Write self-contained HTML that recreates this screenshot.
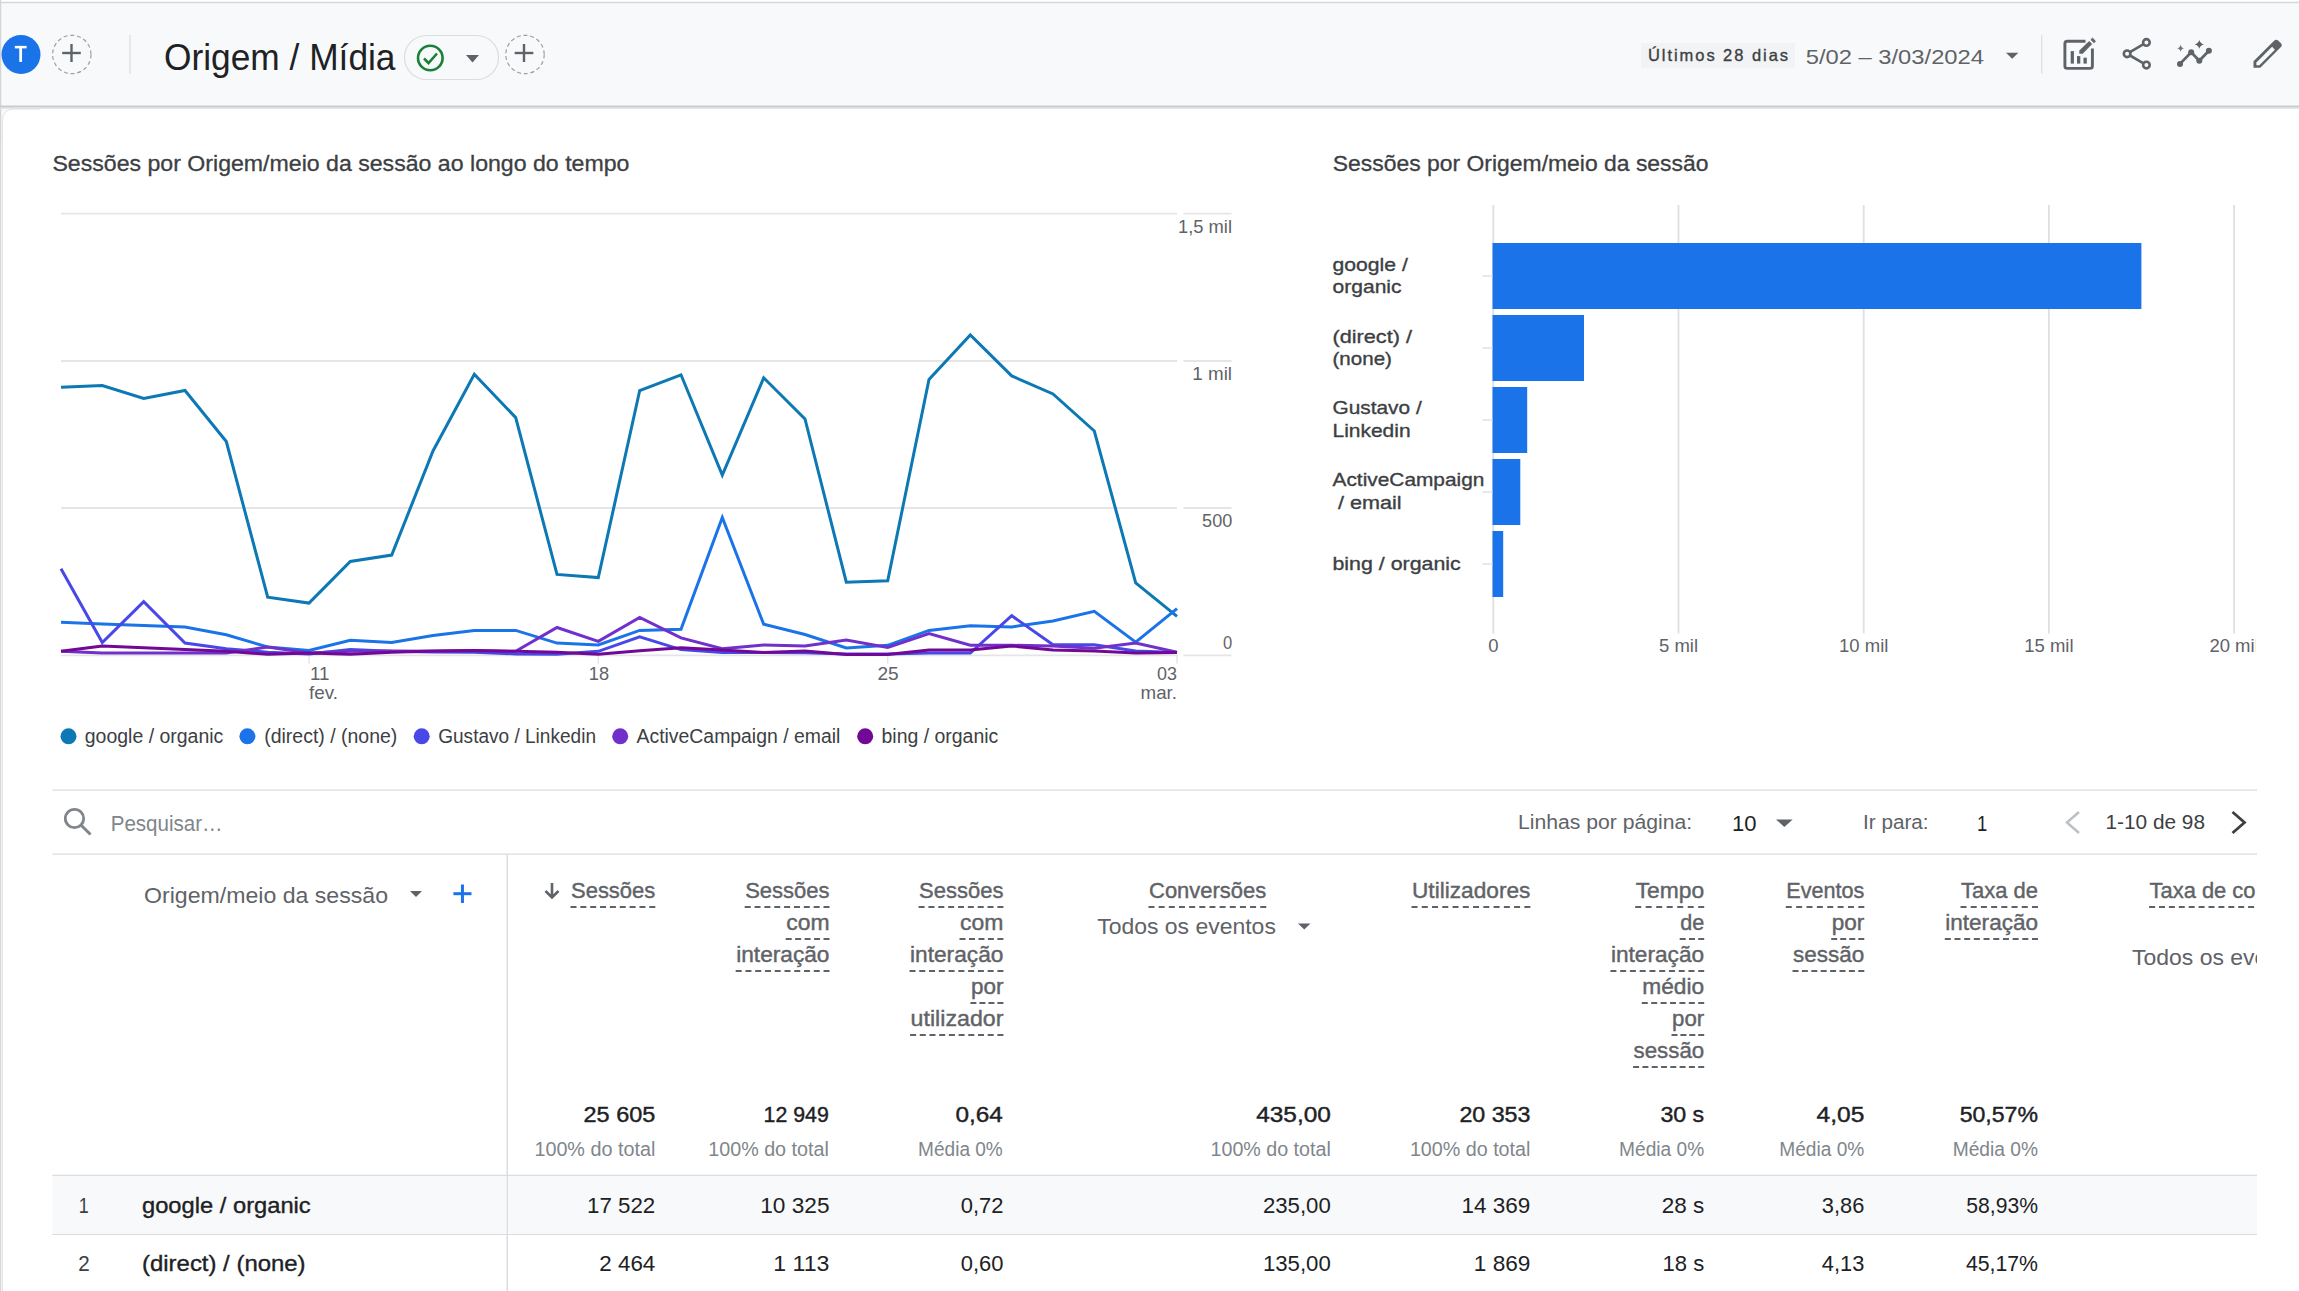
<!DOCTYPE html>
<html><head><meta charset="utf-8"><title>Origem / Mídia</title>
<style>
html,body{margin:0;padding:0;background:#fff;overflow:hidden;}
svg{display:block;font-family:"Liberation Sans",sans-serif;}
</style></head><body>
<svg width="2299" height="1291" viewBox="0 0 2299 1291">
<rect x="0" y="0" width="2299" height="140" fill="#f8f9fa" />
<rect x="0" y="0" width="2299" height="1.5" fill="#ffffff" />
<line x1="0" y1="2.5" x2="2299" y2="2.5" stroke="#d6d9dc" stroke-width="1.5" />
<line x1="0.5" y1="0" x2="0.5" y2="1291" stroke="#d3d5d8" stroke-width="1.5" />
<line x1="0" y1="106.5" x2="2299" y2="106.5" stroke="#c9cacc" stroke-width="1.5" />
<line x1="0" y1="108" x2="2299" y2="108" stroke="#dfe1e3" stroke-width="1.5" />
<path d="M2.5 1291 L2.5 121 Q2.5 109 14.5 109 L2299 109 L2299 1291 Z" fill="#ffffff"/>
<path d="M2.5 1291 L2.5 121 Q2.5 109 14.5 109 L40 109" fill="none" stroke="#e3e4e6" stroke-width="1"/>
<line x1="0" y1="106.5" x2="2299" y2="106.5" stroke="#c9cacc" stroke-width="1.5" />
<line x1="14" y1="108.2" x2="2299" y2="108.2" stroke="#dfe1e3" stroke-width="1.2" />
<circle cx="21" cy="54.5" r="19.5" fill="#1a73e8"/>
<rect x="14.8" y="45.9" width="11.8" height="2.5" fill="#ffffff" />
<rect x="19.25" y="45.9" width="2.8" height="16" fill="#ffffff" />
<circle cx="71.8" cy="54.5" r="19.2" fill="none" stroke="#9aa0a6" stroke-width="1.2" stroke-dasharray="4 2.8"/>
<line x1="62.2" y1="53" x2="80.8" y2="53" stroke="#5f6368" stroke-width="2.4" />
<line x1="71.5" y1="44" x2="71.5" y2="62" stroke="#5f6368" stroke-width="2.4" />
<circle cx="525" cy="54.5" r="19.2" fill="none" stroke="#9aa0a6" stroke-width="1.2" stroke-dasharray="4 2.8"/>
<line x1="514.7" y1="53" x2="533.3" y2="53" stroke="#5f6368" stroke-width="2.4" />
<line x1="524" y1="44" x2="524" y2="62" stroke="#5f6368" stroke-width="2.4" />
<line x1="130" y1="35" x2="130" y2="74" stroke="#dadce0" stroke-width="1.2" />
<text x="164.0" y="70.0" font-size="36" fill="#202124" textLength="231.5" lengthAdjust="spacingAndGlyphs">Origem / Mídia</text>
<rect x="404.5" y="35.5" width="94" height="44" rx="22" fill="none" stroke="#dadce0" stroke-width="1.2"/>
<circle cx="430.3" cy="58" r="12.3" fill="none" stroke="#188038" stroke-width="2.6"/>
<polyline points="424,58.5 428.5,63 437,53.5" fill="none" stroke="#188038" stroke-width="2.6"/>
<polygon points="466,55 479,55 472.5,62.5" fill="#5f6368"/>
<rect x="1641" y="43" width="154" height="25.3" fill="#f1f3f4" />
<text x="1648.0" y="60.7" font-size="16.5" fill="#3c4043" stroke="#3c4043" stroke-width="0.35" textLength="140.0" lengthAdjust="spacing">Últimos 28 dias</text>
<text x="1805.7" y="63.5" font-size="21" fill="#5f6368" textLength="178.3" lengthAdjust="spacingAndGlyphs">5/02 – 3/03/2024</text>
<polygon points="2006,52.8 2018.4,52.8 2012.2,58.8" fill="#5f6368"/>
<line x1="2041.7" y1="35.3" x2="2041.7" y2="73.6" stroke="#dadce0" stroke-width="1.2" />
<path d="M2085.5 41.3 L2067.3 41.3 Q2064.9 41.3 2064.9 43.7 L2064.9 66 Q2064.9 68.4 2067.3 68.4 L2090 68.4 Q2092.4 68.4 2092.4 66 L2092.4 48.5" fill="none" stroke="#5f6368" stroke-width="2.9"/>
<rect x="2070.7" y="51.1" width="3.2" height="12.5" fill="#5f6368" />
<rect x="2077" y="56.1" width="3.3" height="7.5" fill="#5f6368" />
<rect x="2083.5" y="57.7" width="3.3" height="5.9" fill="#5f6368" />
<path d="M2079.3 50.6 L2089.2 41.1 L2092.2 44.1 L2082.7 53.8 L2079.3 53.8 Z" fill="#5f6368"/>
<path d="M2090.9 39.6 L2092.5 38.2 L2095.4 41 L2094.1 42.7 Z" fill="#5f6368" stroke="#5f6368" stroke-width="1"/>
<g fill="none" stroke="#5f6368" stroke-width="2.6"><circle cx="2146.4" cy="42.4" r="3.3"/><circle cx="2127.1" cy="53.8" r="3.3"/><circle cx="2146.4" cy="65.05" r="3.3"/><line x1="2130" y1="52.1" x2="2143.5" y2="44.1"/><line x1="2130" y1="55.5" x2="2143.5" y2="63.3"/></g>
<polyline points="2180,63.9 2191.2,52.2 2199.3,60.7 2208.9,50.7" fill="none" stroke="#5f6368" stroke-width="2.7"/>
<circle cx="2180" cy="63.9" r="3" fill="#5f6368"/>
<circle cx="2191.2" cy="52.2" r="3" fill="#5f6368"/>
<circle cx="2199.3" cy="60.7" r="3" fill="#5f6368"/>
<circle cx="2208.9" cy="50.7" r="3" fill="#5f6368"/>
<path d="M2199.3 40.0 Q2200.2000000000003 43.5 2203.9 44.4 Q2200.2000000000003 45.3 2199.3 48.8 Q2198.4 45.3 2194.7000000000003 44.4 Q2198.4 43.5 2199.3 40.0 Z" fill="#5f6368"/>
<path d="M2180.6 44.5 Q2180.95 47.949999999999996 2184.6 48.3 Q2180.95 48.65 2180.6 52.099999999999994 Q2180.25 48.65 2176.6 48.3 Q2180.25 47.949999999999996 2180.6 44.5 Z" fill="#6f7479"/>
<path d="M2253.5 67.7 L2253.5 61.3 L2274.1 40.7 Q2276.25 38.55 2278.4 40.7 L2280.7 43 Q2282.85 45.15 2280.7 47.3 L2260.3 67.7 Z" fill="#5f6368"/>
<path d="M2272.05 46.85 L2274.9 49.7 L2259.4 65.2 L2256.4 65.2 L2256.4 62.5 Z" fill="#f8f9fa"/>
<text x="52.4" y="170.8" font-size="22" fill="#3c4043" stroke="#3c4043" stroke-width="0.3" textLength="577.0" lengthAdjust="spacingAndGlyphs">Sessões por Origem/meio da sessão ao longo do tempo</text>
<line x1="61" y1="213.7" x2="1177" y2="213.7" stroke="#e5e5e5" stroke-width="1.8" />
<line x1="1183.5" y1="213.7" x2="1231.5" y2="213.7" stroke="#e5e5e5" stroke-width="1.8" />
<line x1="61" y1="361" x2="1177" y2="361" stroke="#e5e5e5" stroke-width="1.8" />
<line x1="1183.5" y1="361" x2="1231.5" y2="361" stroke="#e5e5e5" stroke-width="1.8" />
<line x1="61" y1="508" x2="1177" y2="508" stroke="#e5e5e5" stroke-width="1.8" />
<line x1="1183.5" y1="508" x2="1231.5" y2="508" stroke="#e5e5e5" stroke-width="1.8" />
<line x1="61" y1="655.3" x2="1177" y2="655.3" stroke="#e5e5e5" stroke-width="1.8" />
<line x1="1183.5" y1="655.3" x2="1231.5" y2="655.3" stroke="#e5e5e5" stroke-width="1.8" />
<text x="1232.0" y="232.8" font-size="19" fill="#5f6368" textLength="54.0" lengthAdjust="spacingAndGlyphs" text-anchor="end">1,5 mil</text>
<text x="1232.0" y="379.8" font-size="19" fill="#5f6368" textLength="39.7" lengthAdjust="spacingAndGlyphs" text-anchor="end">1 mil</text>
<text x="1232.3" y="526.8" font-size="19" fill="#5f6368" textLength="30.2" lengthAdjust="spacingAndGlyphs" text-anchor="end">500</text>
<text x="1232.3" y="648.5" font-size="19" fill="#5f6368" textLength="9.2" lengthAdjust="spacingAndGlyphs" text-anchor="end">0</text>
<line x1="309" y1="655" x2="309" y2="663.5" stroke="#e5e5e5" stroke-width="1.5" />
<line x1="598.3" y1="655" x2="598.3" y2="663.5" stroke="#e5e5e5" stroke-width="1.5" />
<line x1="887.7" y1="655" x2="887.7" y2="663.5" stroke="#e5e5e5" stroke-width="1.5" />
<line x1="1177" y1="655" x2="1177" y2="663.5" stroke="#e5e5e5" stroke-width="1.5" />
<text x="310.0" y="680.2" font-size="19" fill="#5f6368" textLength="19.5" lengthAdjust="spacingAndGlyphs">11</text>
<text x="309.0" y="698.5" font-size="19" fill="#5f6368" textLength="29.0" lengthAdjust="spacingAndGlyphs">fev.</text>
<text x="598.9" y="679.8" font-size="19" fill="#5f6368" textLength="20.3" lengthAdjust="spacingAndGlyphs" text-anchor="middle">18</text>
<text x="888.0" y="679.8" font-size="19" fill="#5f6368" textLength="21.2" lengthAdjust="spacingAndGlyphs" text-anchor="middle">25</text>
<text x="1177.0" y="679.7" font-size="19" fill="#5f6368" textLength="20.0" lengthAdjust="spacingAndGlyphs" text-anchor="end">03</text>
<text x="1177.0" y="698.7" font-size="19" fill="#5f6368" textLength="36.5" lengthAdjust="spacingAndGlyphs" text-anchor="end">mar.</text>
<polyline points="61.0,387.3 102.3,385.6 143.7,398.4 185.0,390.5 226.3,441.5 267.7,597.2 309.0,603.1 350.3,561.4 391.7,555.1 433.0,451.0 474.3,374.2 515.7,417.6 557.0,574.4 598.3,577.6 639.7,390.5 681.0,374.8 722.3,475.1 763.7,377.8 805.0,419.0 846.3,582.2 887.7,580.8 929.0,379.4 970.3,335.0 1011.7,375.9 1053.0,394.0 1094.3,431.0 1135.7,582.8 1177.0,616.3" fill="none" stroke="#0c78b4" stroke-width="3" stroke-linejoin="miter" stroke-miterlimit="4"/>
<polyline points="61.0,622.3 102.3,624.0 143.7,625.6 185.0,627.0 226.3,634.8 267.7,647.0 309.0,650.4 350.3,640.3 391.7,642.6 433.0,635.5 474.3,630.4 515.7,630.4 557.0,643.1 598.3,644.9 639.7,630.4 681.0,629.2 722.3,517.4 763.7,624.3 805.0,634.5 846.3,647.9 887.7,645.3 929.0,630.4 970.3,625.7 1011.7,626.9 1053.0,621.0 1094.3,611.4 1135.7,642.2 1177.0,608.6" fill="none" stroke="#1a73e8" stroke-width="3" stroke-linejoin="miter" stroke-miterlimit="4"/>
<polyline points="61.0,568.7 102.3,642.6 143.7,601.7 185.0,643.1 226.3,648.7 267.7,652.2 309.0,653.9 350.3,649.6 391.7,651.3 433.0,652.0 474.3,652.2 515.7,653.9 557.0,654.3 598.3,651.3 639.7,636.9 681.0,649.6 722.3,652.5 763.7,652.5 805.0,652.8 846.3,654.0 887.7,654.0 929.0,653.0 970.3,653.0 1011.7,615.7 1053.0,644.8 1094.3,644.8 1135.7,650.9 1177.0,652.6" fill="none" stroke="#4848e8" stroke-width="3" stroke-linejoin="miter" stroke-miterlimit="4"/>
<polyline points="61.0,651.3 102.3,653.0 143.7,653.0 185.0,653.0 226.3,653.0 267.7,647.0 309.0,653.0 350.3,651.3 391.7,651.0 433.0,651.3 474.3,650.4 515.7,651.3 557.0,627.5 598.3,641.4 639.7,617.4 681.0,637.9 722.3,648.7 763.7,644.9 805.0,646.0 846.3,640.1 887.7,647.4 929.0,633.5 970.3,645.3 1011.7,645.3 1053.0,646.0 1094.3,648.3 1135.7,643.0 1177.0,652.3" fill="none" stroke="#7230ca" stroke-width="3" stroke-linejoin="miter" stroke-miterlimit="4"/>
<polyline points="61.0,651.3 102.3,646.1 143.7,647.8 185.0,649.6 226.3,651.3 267.7,654.3 309.0,653.0 350.3,654.3 391.7,652.2 433.0,651.0 474.3,650.4 515.7,651.3 557.0,652.2 598.3,654.3 639.7,650.8 681.0,647.8 722.3,650.1 763.7,652.5 805.0,651.0 846.3,654.4 887.7,654.4 929.0,650.0 970.3,650.0 1011.7,646.0 1053.0,650.0 1094.3,650.9 1135.7,653.0 1177.0,652.6" fill="none" stroke="#720896" stroke-width="3" stroke-linejoin="miter" stroke-miterlimit="4"/>
<circle cx="68.5" cy="736.3" r="8" fill="#0c78b4"/>
<text x="84.8" y="742.8" font-size="19.5" fill="#3c4043" textLength="138.5" lengthAdjust="spacingAndGlyphs">google / organic</text>
<circle cx="247.4" cy="736.3" r="8" fill="#1a73e8"/>
<text x="264.2" y="742.8" font-size="19.5" fill="#3c4043" textLength="133.1" lengthAdjust="spacingAndGlyphs">(direct) / (none)</text>
<circle cx="421.7" cy="736.3" r="8" fill="#4848e8"/>
<text x="438.2" y="742.8" font-size="19.5" fill="#3c4043" textLength="157.8" lengthAdjust="spacingAndGlyphs">Gustavo / Linkedin</text>
<circle cx="620.2" cy="736.3" r="8" fill="#7230ca"/>
<text x="636.5" y="742.8" font-size="19.5" fill="#3c4043" textLength="203.8" lengthAdjust="spacingAndGlyphs">ActiveCampaign / email</text>
<circle cx="865.2" cy="736.3" r="8" fill="#720896"/>
<text x="881.5" y="742.8" font-size="19.5" fill="#3c4043" textLength="116.8" lengthAdjust="spacingAndGlyphs">bing / organic</text>
<text x="1332.8" y="170.8" font-size="22" fill="#3c4043" stroke="#3c4043" stroke-width="0.3" textLength="375.7" lengthAdjust="spacingAndGlyphs">Sessões por Origem/meio da sessão</text>
<line x1="1493.3" y1="205" x2="1493.3" y2="633.5" stroke="#e0e0e3" stroke-width="1.8" />
<line x1="1678.5" y1="205" x2="1678.5" y2="633.5" stroke="#e0e0e3" stroke-width="1.8" />
<line x1="1863.7" y1="205" x2="1863.7" y2="633.5" stroke="#e0e0e3" stroke-width="1.8" />
<line x1="2048.9" y1="205" x2="2048.9" y2="633.5" stroke="#e0e0e3" stroke-width="1.8" />
<line x1="2234.1" y1="205" x2="2234.1" y2="633.5" stroke="#e0e0e3" stroke-width="1.8" />
<rect x="1492.5" y="243" width="648.9" height="66" fill="#1a73e8" />
<line x1="1482.5" y1="276" x2="1492.5" y2="276" stroke="#e0e0e3" stroke-width="1.5" />
<rect x="1492.5" y="315" width="91.5" height="66" fill="#1a73e8" />
<line x1="1482.5" y1="348" x2="1492.5" y2="348" stroke="#e0e0e3" stroke-width="1.5" />
<rect x="1492.5" y="387" width="34.7" height="66" fill="#1a73e8" />
<line x1="1482.5" y1="420" x2="1492.5" y2="420" stroke="#e0e0e3" stroke-width="1.5" />
<rect x="1492.5" y="459" width="27.8" height="66" fill="#1a73e8" />
<line x1="1482.5" y1="492" x2="1492.5" y2="492" stroke="#e0e0e3" stroke-width="1.5" />
<rect x="1492.5" y="531" width="10.7" height="66" fill="#1a73e8" />
<line x1="1482.5" y1="564" x2="1492.5" y2="564" stroke="#e0e0e3" stroke-width="1.5" />
<text x="1332.5" y="270.6" font-size="19" fill="#3c4043" stroke="#3c4043" stroke-width="0.35" textLength="75.3" lengthAdjust="spacingAndGlyphs">google /</text>
<text x="1332.5" y="293.0" font-size="19" fill="#3c4043" stroke="#3c4043" stroke-width="0.35" textLength="69.1" lengthAdjust="spacingAndGlyphs">organic</text>
<text x="1332.5" y="342.5" font-size="19" fill="#3c4043" stroke="#3c4043" stroke-width="0.35" textLength="79.5" lengthAdjust="spacingAndGlyphs">(direct) /</text>
<text x="1332.5" y="364.8" font-size="19" fill="#3c4043" stroke="#3c4043" stroke-width="0.35" textLength="59.4" lengthAdjust="spacingAndGlyphs">(none)</text>
<text x="1332.5" y="414.1" font-size="19" fill="#3c4043" stroke="#3c4043" stroke-width="0.35" textLength="89.2" lengthAdjust="spacingAndGlyphs">Gustavo /</text>
<text x="1332.5" y="437.3" font-size="19" fill="#3c4043" stroke="#3c4043" stroke-width="0.35" textLength="78.1" lengthAdjust="spacingAndGlyphs">Linkedin</text>
<text x="1332.5" y="485.7" font-size="19" fill="#3c4043" stroke="#3c4043" stroke-width="0.35" textLength="151.9" lengthAdjust="spacingAndGlyphs">ActiveCampaign</text>
<text x="1338.0" y="508.9" font-size="19" fill="#3c4043" stroke="#3c4043" stroke-width="0.35" textLength="63.6" lengthAdjust="spacingAndGlyphs">/ email</text>
<text x="1332.5" y="570.2" font-size="19" fill="#3c4043" stroke="#3c4043" stroke-width="0.35" textLength="128.2" lengthAdjust="spacingAndGlyphs">bing / organic</text>
<text x="1493.3" y="651.8" font-size="18.5" fill="#5f6368" text-anchor="middle">0</text>
<text x="1678.5" y="651.8" font-size="18.5" fill="#5f6368" text-anchor="middle">5 mil</text>
<text x="1863.7" y="651.8" font-size="18.5" fill="#5f6368" text-anchor="middle">10 mil</text>
<text x="2048.9" y="651.8" font-size="18.5" fill="#5f6368" text-anchor="middle">15 mil</text>
<clipPath id="cl20"><rect x="1300" y="600" width="956" height="80"/></clipPath>
<text x="2234.1" y="651.8" font-size="18.5" fill="#5f6368" text-anchor="middle" clip-path="url(#cl20)">20 mil</text>
<line x1="52.4" y1="790.2" x2="2257" y2="790.2" stroke="#dadce0" stroke-width="1.2" />
<line x1="52.4" y1="854.2" x2="2257" y2="854.2" stroke="#dadce0" stroke-width="1.2" />
<circle cx="74.5" cy="818.5" r="9.2" fill="none" stroke="#80868b" stroke-width="2.8"/>
<line x1="81.2" y1="825.2" x2="90.5" y2="834.5" stroke="#80868b" stroke-width="3" />
<text x="110.7" y="831.3" font-size="22" fill="#80868b" textLength="112.0" lengthAdjust="spacingAndGlyphs">Pesquisar…</text>
<text x="1518.0" y="829.3" font-size="20" fill="#5f6368" textLength="174.2" lengthAdjust="spacingAndGlyphs">Linhas por página:</text>
<text x="1732.0" y="831.0" font-size="22" fill="#202124" textLength="24.5" lengthAdjust="spacingAndGlyphs">10</text>
<polygon points="1776,819.5 1792.7,819.5 1784.35,827" fill="#5f6368"/>
<text x="1863.0" y="829.3" font-size="20" fill="#5f6368" textLength="65.6" lengthAdjust="spacingAndGlyphs">Ir para:</text>
<text x="1977.0" y="831.0" font-size="22" fill="#202124" textLength="10.3" lengthAdjust="spacingAndGlyphs">1</text>
<polyline points="2079,812 2067,822.5 2079,833" fill="none" stroke="#bdc1c6" stroke-width="2.6"/>
<text x="2105.5" y="829.3" font-size="20" fill="#3c4043" textLength="99.5" lengthAdjust="spacingAndGlyphs">1-10 de 98</text>
<polyline points="2232.5,812 2244.5,822.5 2232.5,833" fill="none" stroke="#3c4043" stroke-width="2.8"/>
<line x1="507.3" y1="854.2" x2="507.3000000000002" y2="1291" stroke="#dadce0" stroke-width="1.2" />
<text x="144.0" y="902.5" font-size="22" fill="#5f6368" textLength="244.0" lengthAdjust="spacingAndGlyphs">Origem/meio da sessão</text>
<polygon points="410,891 422,891 416,897" fill="#5f6368"/>
<line x1="453.4" y1="893.7" x2="471.5" y2="893.7" stroke="#1a73e8" stroke-width="3" />
<line x1="462.45" y1="884.5" x2="462.45" y2="903" stroke="#1a73e8" stroke-width="3" />
<path d="M552 883 L552 897 M545.5 891 L552 897.5 L558.5 891" fill="none" stroke="#5f6368" stroke-width="2.6"/>
<text x="655.3" y="898.0" font-size="22" fill="#5f6368" stroke="#5f6368" stroke-width="0.4" textLength="84.3" lengthAdjust="spacingAndGlyphs" text-anchor="end">Sessões</text>
<line x1="570.5" y1="907" x2="655.3" y2="907" stroke="#5f6368" stroke-width="1.9" stroke-dasharray="6 3.85"/>
<text x="829.5" y="898.0" font-size="22" fill="#5f6368" stroke="#5f6368" stroke-width="0.4" textLength="84.3" lengthAdjust="spacingAndGlyphs" text-anchor="end">Sessões</text>
<line x1="744.7" y1="907" x2="829.5" y2="907" stroke="#5f6368" stroke-width="1.9" stroke-dasharray="6 3.85"/>
<text x="829.5" y="930.0" font-size="22" fill="#5f6368" stroke="#5f6368" stroke-width="0.4" textLength="43.3" lengthAdjust="spacingAndGlyphs" text-anchor="end">com</text>
<line x1="785.7" y1="939" x2="829.5" y2="939" stroke="#5f6368" stroke-width="1.9" stroke-dasharray="6 3.45"/>
<text x="829.5" y="962.0" font-size="22" fill="#5f6368" stroke="#5f6368" stroke-width="0.4" textLength="93.3" lengthAdjust="spacingAndGlyphs" text-anchor="end">interação</text>
<line x1="735.7" y1="971" x2="829.5" y2="971" stroke="#5f6368" stroke-width="1.9" stroke-dasharray="6 3.76"/>
<text x="1003.4" y="898.0" font-size="22" fill="#5f6368" stroke="#5f6368" stroke-width="0.4" textLength="84.3" lengthAdjust="spacingAndGlyphs" text-anchor="end">Sessões</text>
<line x1="918.6" y1="907" x2="1003.4" y2="907" stroke="#5f6368" stroke-width="1.9" stroke-dasharray="6 3.85"/>
<text x="1003.4" y="930.0" font-size="22" fill="#5f6368" stroke="#5f6368" stroke-width="0.4" textLength="43.4" lengthAdjust="spacingAndGlyphs" text-anchor="end">com</text>
<line x1="959.5" y1="939" x2="1003.4" y2="939" stroke="#5f6368" stroke-width="1.9" stroke-dasharray="6 3.47"/>
<text x="1003.4" y="962.0" font-size="22" fill="#5f6368" stroke="#5f6368" stroke-width="0.4" textLength="93.4" lengthAdjust="spacingAndGlyphs" text-anchor="end">interação</text>
<line x1="909.5" y1="971" x2="1003.4" y2="971" stroke="#5f6368" stroke-width="1.9" stroke-dasharray="6 3.77"/>
<text x="1003.4" y="994.0" font-size="22" fill="#5f6368" stroke="#5f6368" stroke-width="0.4" textLength="32.5" lengthAdjust="spacingAndGlyphs" text-anchor="end">por</text>
<line x1="970.4" y1="1003" x2="1003.4" y2="1003" stroke="#5f6368" stroke-width="1.9" stroke-dasharray="6 3.00"/>
<text x="1003.4" y="1026.0" font-size="22" fill="#5f6368" stroke="#5f6368" stroke-width="0.4" textLength="92.8" lengthAdjust="spacingAndGlyphs" text-anchor="end">utilizador</text>
<line x1="910.1" y1="1035" x2="1003.4" y2="1035" stroke="#5f6368" stroke-width="1.9" stroke-dasharray="6 3.70"/>
<text x="1266.3" y="898.0" font-size="22" fill="#5f6368" stroke="#5f6368" stroke-width="0.4" textLength="117.3" lengthAdjust="spacingAndGlyphs" text-anchor="end">Conversões</text>
<line x1="1148.5" y1="907" x2="1266.3" y2="907" stroke="#5f6368" stroke-width="1.9" stroke-dasharray="6 4.16"/>
<text x="1097.2" y="934.0" font-size="22" fill="#5f6368" textLength="178.7" lengthAdjust="spacingAndGlyphs">Todos os eventos</text>
<polygon points="1298,923.5 1310.5,923.5 1304.25,929.5" fill="#5f6368"/>
<text x="1530.4" y="898.0" font-size="22" fill="#5f6368" stroke="#5f6368" stroke-width="0.4" textLength="118.4" lengthAdjust="spacingAndGlyphs" text-anchor="end">Utilizadores</text>
<line x1="1411.5" y1="907" x2="1530.4" y2="907" stroke="#5f6368" stroke-width="1.9" stroke-dasharray="6 4.26"/>
<text x="1704.2" y="898.0" font-size="22" fill="#5f6368" stroke="#5f6368" stroke-width="0.4" textLength="68.5" lengthAdjust="spacingAndGlyphs" text-anchor="end">Tempo</text>
<line x1="1635.2" y1="907" x2="1704.2" y2="907" stroke="#5f6368" stroke-width="1.9" stroke-dasharray="6 4.50"/>
<text x="1704.2" y="930.0" font-size="22" fill="#5f6368" stroke="#5f6368" stroke-width="0.4" textLength="24.0" lengthAdjust="spacingAndGlyphs" text-anchor="end">de</text>
<line x1="1679.7" y1="939" x2="1704.2" y2="939" stroke="#5f6368" stroke-width="1.9" stroke-dasharray="6 3.25"/>
<text x="1704.2" y="962.0" font-size="22" fill="#5f6368" stroke="#5f6368" stroke-width="0.4" textLength="93.3" lengthAdjust="spacingAndGlyphs" text-anchor="end">interação</text>
<line x1="1610.4" y1="971" x2="1704.2" y2="971" stroke="#5f6368" stroke-width="1.9" stroke-dasharray="6 3.76"/>
<text x="1704.2" y="994.0" font-size="22" fill="#5f6368" stroke="#5f6368" stroke-width="0.4" textLength="61.9" lengthAdjust="spacingAndGlyphs" text-anchor="end">médio</text>
<line x1="1641.8" y1="1003" x2="1704.2" y2="1003" stroke="#5f6368" stroke-width="1.9" stroke-dasharray="6 3.40"/>
<text x="1704.2" y="1026.0" font-size="22" fill="#5f6368" stroke="#5f6368" stroke-width="0.4" textLength="32.2" lengthAdjust="spacingAndGlyphs" text-anchor="end">por</text>
<line x1="1671.5" y1="1035" x2="1704.2" y2="1035" stroke="#5f6368" stroke-width="1.9" stroke-dasharray="6 2.90"/>
<text x="1704.2" y="1058.0" font-size="22" fill="#5f6368" stroke="#5f6368" stroke-width="0.4" textLength="70.6" lengthAdjust="spacingAndGlyphs" text-anchor="end">sessão</text>
<line x1="1633.1" y1="1067" x2="1704.2" y2="1067" stroke="#5f6368" stroke-width="1.9" stroke-dasharray="6 3.30"/>
<text x="1864.3" y="898.0" font-size="22" fill="#5f6368" stroke="#5f6368" stroke-width="0.4" textLength="78.0" lengthAdjust="spacingAndGlyphs" text-anchor="end">Eventos</text>
<line x1="1785.8" y1="907" x2="1864.3" y2="907" stroke="#5f6368" stroke-width="1.9" stroke-dasharray="6 4.36"/>
<text x="1864.3" y="930.0" font-size="22" fill="#5f6368" stroke="#5f6368" stroke-width="0.4" textLength="32.6" lengthAdjust="spacingAndGlyphs" text-anchor="end">por</text>
<line x1="1831.2" y1="939" x2="1864.3" y2="939" stroke="#5f6368" stroke-width="1.9" stroke-dasharray="6 3.03"/>
<text x="1864.3" y="962.0" font-size="22" fill="#5f6368" stroke="#5f6368" stroke-width="0.4" textLength="71.3" lengthAdjust="spacingAndGlyphs" text-anchor="end">sessão</text>
<line x1="1792.5" y1="971" x2="1864.3" y2="971" stroke="#5f6368" stroke-width="1.9" stroke-dasharray="6 3.40"/>
<text x="2038.0" y="898.0" font-size="22" fill="#5f6368" stroke="#5f6368" stroke-width="0.4" textLength="77.0" lengthAdjust="spacingAndGlyphs" text-anchor="end">Taxa de</text>
<line x1="1960.5" y1="907" x2="2038" y2="907" stroke="#5f6368" stroke-width="1.9" stroke-dasharray="6 4.21"/>
<text x="2038.0" y="930.0" font-size="22" fill="#5f6368" stroke="#5f6368" stroke-width="0.4" textLength="92.7" lengthAdjust="spacingAndGlyphs" text-anchor="end">interação</text>
<line x1="1944.8" y1="939" x2="2038" y2="939" stroke="#5f6368" stroke-width="1.9" stroke-dasharray="6 3.69"/>
<clipPath id="clr"><rect x="1300" y="850" width="957" height="200"/></clipPath>
<g clip-path="url(#clr)">
<text x="2149.6" y="898.0" font-size="22" fill="#5f6368" stroke="#5f6368" stroke-width="0.4" textLength="105.9" lengthAdjust="spacingAndGlyphs">Taxa de co</text>
<line x1="2149.1" y1="907" x2="2300" y2="907" stroke="#5f6368" stroke-width="1.9" stroke-dasharray="6 3.9"/>
<text x="2132.0" y="965.0" font-size="22" fill="#5f6368" textLength="178.7" lengthAdjust="spacingAndGlyphs">Todos os eventos</text>
</g>
<text x="655.3" y="1122.0" font-size="21.5" fill="#202124" stroke="#202124" stroke-width="0.4" textLength="71.8" lengthAdjust="spacingAndGlyphs" text-anchor="end">25 605</text>
<text x="655.3" y="1156.2" font-size="19.5" fill="#80868b" textLength="120.9" lengthAdjust="spacingAndGlyphs" text-anchor="end">100% do total</text>
<text x="828.8" y="1122.0" font-size="21.5" fill="#202124" stroke="#202124" stroke-width="0.4" textLength="65.2" lengthAdjust="spacingAndGlyphs" text-anchor="end">12 949</text>
<text x="828.8" y="1156.2" font-size="19.5" fill="#80868b" textLength="120.5" lengthAdjust="spacingAndGlyphs" text-anchor="end">100% do total</text>
<text x="1002.8" y="1122.0" font-size="21.5" fill="#202124" stroke="#202124" stroke-width="0.4" textLength="47.4" lengthAdjust="spacingAndGlyphs" text-anchor="end">0,64</text>
<text x="1002.8" y="1156.2" font-size="19.5" fill="#80868b" textLength="84.7" lengthAdjust="spacingAndGlyphs" text-anchor="end">Média 0%</text>
<text x="1330.8" y="1122.0" font-size="21.5" fill="#202124" stroke="#202124" stroke-width="0.4" textLength="74.6" lengthAdjust="spacingAndGlyphs" text-anchor="end">435,00</text>
<text x="1330.8" y="1156.2" font-size="19.5" fill="#80868b" textLength="120.3" lengthAdjust="spacingAndGlyphs" text-anchor="end">100% do total</text>
<text x="1530.4" y="1122.0" font-size="21.5" fill="#202124" stroke="#202124" stroke-width="0.4" textLength="71.0" lengthAdjust="spacingAndGlyphs" text-anchor="end">20 353</text>
<text x="1530.4" y="1156.2" font-size="19.5" fill="#80868b" textLength="120.5" lengthAdjust="spacingAndGlyphs" text-anchor="end">100% do total</text>
<text x="1704.2" y="1122.0" font-size="21.5" fill="#202124" stroke="#202124" stroke-width="0.4" textLength="43.8" lengthAdjust="spacingAndGlyphs" text-anchor="end">30 s</text>
<text x="1704.2" y="1156.2" font-size="19.5" fill="#80868b" textLength="85.1" lengthAdjust="spacingAndGlyphs" text-anchor="end">Média 0%</text>
<text x="1864.3" y="1122.0" font-size="21.5" fill="#202124" stroke="#202124" stroke-width="0.4" textLength="47.8" lengthAdjust="spacingAndGlyphs" text-anchor="end">4,05</text>
<text x="1864.3" y="1156.2" font-size="19.5" fill="#80868b" textLength="85.0" lengthAdjust="spacingAndGlyphs" text-anchor="end">Média 0%</text>
<text x="2038.0" y="1122.0" font-size="21.5" fill="#202124" stroke="#202124" stroke-width="0.4" textLength="78.3" lengthAdjust="spacingAndGlyphs" text-anchor="end">50,57%</text>
<text x="2038.0" y="1156.2" font-size="19.5" fill="#80868b" textLength="85.3" lengthAdjust="spacingAndGlyphs" text-anchor="end">Média 0%</text>
<rect x="52.4" y="1175.3" width="2204.6" height="59.2" fill="#f8f9fa" />
<line x1="52.4" y1="1175.3" x2="2257" y2="1175.3" stroke="#dadce0" stroke-width="1.2" />
<line x1="52.4" y1="1234.5" x2="2257" y2="1234.5" stroke="#dadce0" stroke-width="1.2" />
<line x1="507.3" y1="854.2" x2="507.3" y2="1291" stroke="#dadce0" stroke-width="1.2" />
<text x="78.8" y="1212.8" font-size="22" fill="#3c4043" textLength="10.0" lengthAdjust="spacingAndGlyphs">1</text>
<text x="142.0" y="1212.8" font-size="22" fill="#202124" stroke="#202124" stroke-width="0.35" textLength="168.7" lengthAdjust="spacingAndGlyphs">google / organic</text>
<text x="78.2" y="1270.9" font-size="22" fill="#3c4043" textLength="11.5" lengthAdjust="spacingAndGlyphs">2</text>
<text x="142.0" y="1270.9" font-size="22" fill="#202124" stroke="#202124" stroke-width="0.35" textLength="163.6" lengthAdjust="spacingAndGlyphs">(direct) / (none)</text>
<text x="655.3" y="1212.8" font-size="22" fill="#202124" textLength="68.3" lengthAdjust="spacingAndGlyphs" text-anchor="end">17 522</text>
<text x="829.5" y="1212.8" font-size="22" fill="#202124" textLength="69.3" lengthAdjust="spacingAndGlyphs" text-anchor="end">10 325</text>
<text x="1003.4" y="1212.8" font-size="22" fill="#202124" textLength="42.7" lengthAdjust="spacingAndGlyphs" text-anchor="end">0,72</text>
<text x="1330.8" y="1212.8" font-size="22" fill="#202124" textLength="67.9" lengthAdjust="spacingAndGlyphs" text-anchor="end">235,00</text>
<text x="1530.4" y="1212.8" font-size="22" fill="#202124" textLength="68.9" lengthAdjust="spacingAndGlyphs" text-anchor="end">14 369</text>
<text x="1704.2" y="1212.8" font-size="22" fill="#202124" textLength="42.5" lengthAdjust="spacingAndGlyphs" text-anchor="end">28 s</text>
<text x="1864.3" y="1212.8" font-size="22" fill="#202124" textLength="42.5" lengthAdjust="spacingAndGlyphs" text-anchor="end">3,86</text>
<text x="2038.0" y="1212.8" font-size="22" fill="#202124" textLength="71.7" lengthAdjust="spacingAndGlyphs" text-anchor="end">58,93%</text>
<text x="655.3" y="1270.9" font-size="22" fill="#202124" textLength="56.0" lengthAdjust="spacingAndGlyphs" text-anchor="end">2 464</text>
<text x="829.5" y="1270.9" font-size="22" fill="#202124" textLength="56.2" lengthAdjust="spacingAndGlyphs" text-anchor="end">1 113</text>
<text x="1003.4" y="1270.9" font-size="22" fill="#202124" textLength="42.7" lengthAdjust="spacingAndGlyphs" text-anchor="end">0,60</text>
<text x="1330.8" y="1270.9" font-size="22" fill="#202124" textLength="67.9" lengthAdjust="spacingAndGlyphs" text-anchor="end">135,00</text>
<text x="1530.4" y="1270.9" font-size="22" fill="#202124" textLength="56.6" lengthAdjust="spacingAndGlyphs" text-anchor="end">1 869</text>
<text x="1704.2" y="1270.9" font-size="22" fill="#202124" textLength="41.7" lengthAdjust="spacingAndGlyphs" text-anchor="end">18 s</text>
<text x="1864.3" y="1270.9" font-size="22" fill="#202124" textLength="42.5" lengthAdjust="spacingAndGlyphs" text-anchor="end">4,13</text>
<text x="2038.0" y="1270.9" font-size="22" fill="#202124" textLength="72.1" lengthAdjust="spacingAndGlyphs" text-anchor="end">45,17%</text>
</svg>
</body></html>
